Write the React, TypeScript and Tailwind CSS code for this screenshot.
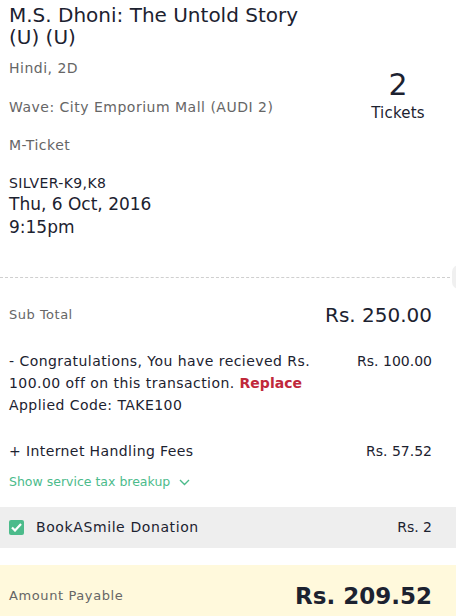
import React from "react";

export default function App() {
  return (
    <div className="w-[456px] h-[616px] overflow-hidden bg-white text-[#1c2230] font-['DejaVu_Sans',sans-serif]">
      {/* Movie details */}
      <div className="flex justify-between px-[9px] pt-[4px]">
        <div>
          <h1 className="text-[20px] leading-[22px]">
            M.S. Dhoni: The Untold Story
            <br />
            (U) (U)
          </h1>
          <div className="mt-[10px] text-[14px] leading-[20px] tracking-[0.5px] text-[#666]">Hindi, 2D</div>
          <div className="mt-[19px] text-[14px] leading-[20px] tracking-[0.5px] text-[#666]">Wave: City Emporium Mall (AUDI 2)</div>
          <div className="mt-[18px] text-[14px] leading-[20px] tracking-[0.5px] text-[#666]">M-Ticket</div>
          <div className="mt-[18px] text-[14px] leading-[20px] tracking-[0.4px]">SILVER-K9,K8</div>
          <div className="text-[17px] leading-[23px]">Thu, 6 Oct, 2016</div>
          <div className="text-[17px] leading-[23px]">9:15pm</div>
        </div>
        <div className="w-[64px] mr-[17px] mt-[64px] flex flex-col items-center">
          <span className="text-[30px] leading-[34px]">2</span>
          <span className="text-[15px] leading-[22px] tracking-[0.2px]">Tickets</span>
        </div>
      </div>

      {/* Divider */}
      <div className="relative mt-[38px]">
        <div className="mr-[6px] border-t border-dashed border-[#cfcfcf]" />
        <div className="absolute right-[-10px] top-[-12px] w-[14px] h-[24px] rounded-full bg-[#f0f0f0]" />
      </div>

      {/* Price breakup */}
      <div className="px-[9px] pr-[24px]">
        <div className="mt-[23px] flex justify-between items-center h-[28px]">
          <span className="text-[13px] tracking-[0.5px] text-[#666]">Sub Total</span>
          <span className="text-[20px]">Rs. 250.00</span>
        </div>
        <div className="mt-[21px] flex justify-between text-[14px] leading-[22px] tracking-[0.45px]">
          <div className="w-[318px]">
            - Congratulations, You have recieved Rs. 100.00 off on this transaction.{" "}
            <span className="font-bold tracking-[0px] text-[#c0283b]">Replace</span>
            <br />
            Applied Code: TAKE100
          </div>
          <span className="tracking-[0px]">Rs. 100.00</span>
        </div>
        <div className="mt-[24px] flex justify-between text-[14px] leading-[22px]">
          <span className="tracking-[0.4px]">+ Internet Handling Fees</span>
          <span>Rs. 57.52</span>
        </div>
        <div className="mt-[10px] flex items-center gap-[9px] text-[12.5px] leading-[20px] text-[#4cbb8b]">
          <span>Show service tax breakup</span>
          <svg width="11" height="7" viewBox="0 0 11 7" fill="none" stroke="currentColor" strokeWidth="1.4">
            <path d="M1 1l4.5 4.5L10 1" />
          </svg>
        </div>
      </div>

      {/* Donation */}
      <div className="mt-[15px] h-[41px] bg-[#eeeeee] flex items-center justify-between pl-[9px] pr-[24px]">
        <div className="flex items-center gap-[12px]">
          <span className="w-[15px] h-[15px] rounded-[2px] bg-[#4cbb8b] flex items-center justify-center">
            <svg width="11" height="9" viewBox="0 0 11 9" fill="none" stroke="white" strokeWidth="2.2">
              <path d="M1 4.5l3 3L10 1" />
            </svg>
          </span>
          <span className="text-[14px] tracking-[0.6px]">BookASmile Donation</span>
        </div>
        <span className="text-[14px]">Rs. 2</span>
      </div>

      {/* Amount payable */}
      <div className="mt-[17px] h-[60px] bg-[#fff9dc] flex items-center justify-between pl-[9px] pr-[24px] pt-[2px]">
        <span className="text-[13px] tracking-[0.6px] text-[#666]">Amount Payable</span>
        <span className="text-[23px] font-bold">Rs. 209.52</span>
      </div>
    </div>
  );
}
